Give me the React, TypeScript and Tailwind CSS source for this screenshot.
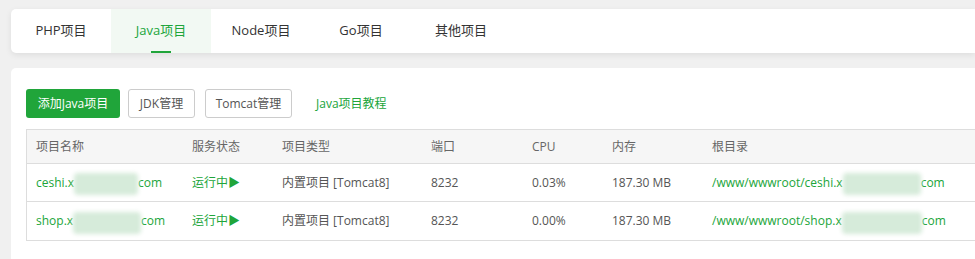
const tabs = ["PHP项目", "Java项目", "Node项目", "Go项目", "其他项目"]

const Blur = ({ w }: { w: number }) => (
  <span className="relative inline-block h-[14px] align-middle" style={{ width: w }}>
    <span className="absolute inset-x-0 top-[-3px] bottom-[-5px] bg-[#d6ebda] blur-[2px] rounded-sm" />
  </span>
)

const rows = [
  { name: "ceshi.x", blur: 64, cpu: "0.03%", path: "/www/wwwroot/ceshi.x", pblur: 78 },
  { name: "shop.x", blur: 68, cpu: "0.00%", path: "/www/wwwroot/shop.x", pblur: 80 },
]

const cols = "grid grid-cols-[156px_90px_149px_101px_80px_100px_1fr]"

export default function App() {
  return (
    <div className="w-[975px] h-[259px] overflow-hidden bg-[#f0f0f0] pl-[11px] pt-[9px] text-[12px] text-[#555] font-['Open_Sans','Noto_Sans_CJK_SC',sans-serif]">
      <div className="h-[44px] bg-white rounded-l-[5px] shadow-[0_2px_6px_rgba(0,0,0,0.08)] flex">
        {tabs.map((t, i) => (
          <div
            key={t}
            className={
              i === 1
                ? "relative w-[100px] flex items-center justify-center text-[13px] text-[#20a53a] bg-[#f2f9f3]"
                : "relative w-[100px] flex items-center justify-center text-[13px] text-[#333]"
            }
          >
            {t}
            {i === 1 && <span className="absolute bottom-0 left-[40px] w-[20px] h-[2px] bg-[#20a53a]" />}
          </div>
        ))}
      </div>

      <div className="mt-[15px] h-[300px] bg-white rounded-l-[5px] pl-[15px] pt-[21px]">
        <div className="flex items-center h-[29px]">
          <button className="h-[29px] w-[94px] rounded-[3px] bg-[#20a53a] text-white text-[12px]">添加Java项目</button>
          <button className="ml-[8px] h-[29px] w-[67px] rounded-[3px] border border-[#ccc] bg-white text-[#555] text-[12px]">JDK管理</button>
          <button className="ml-[10px] h-[29px] w-[87px] rounded-[3px] border border-[#ccc] bg-white text-[#555] text-[12px]">Tomcat管理</button>
          <span className="ml-[24px] text-[#20a53a]">Java项目教程</span>
        </div>

        <div className="mt-[11px] border-l border-y border-[#ddd]">
          <div className={`${cols} h-[34px] items-center bg-[#f6f6f6] border-b border-[#ddd] pl-[9px] text-[#666]`}>
            <span>项目名称</span>
            <span>服务状态</span>
            <span>项目类型</span>
            <span>端口</span>
            <span>CPU</span>
            <span>内存</span>
            <span>根目录</span>
          </div>
          {rows.map((r, i) => (
            <div
              key={r.name}
              className={`${cols} h-[38px] items-center pl-[9px] ${i === 0 ? "border-b border-[#ddd]" : ""}`}
            >
              <span className="text-[#20a53a] whitespace-nowrap">
                {r.name}
                <Blur w={r.blur} />
                com
              </span>
              <span className="text-[#20a53a]">运行中▶</span>
              <span>内置项目 [Tomcat8]</span>
              <span>8232</span>
              <span>{r.cpu}</span>
              <span>187.30 MB</span>
              <span className="text-[#20a53a] whitespace-nowrap">
                {r.path}
                <Blur w={r.pblur} />
                com
              </span>
            </div>
          ))}
        </div>
      </div>
    </div>
  )
}
